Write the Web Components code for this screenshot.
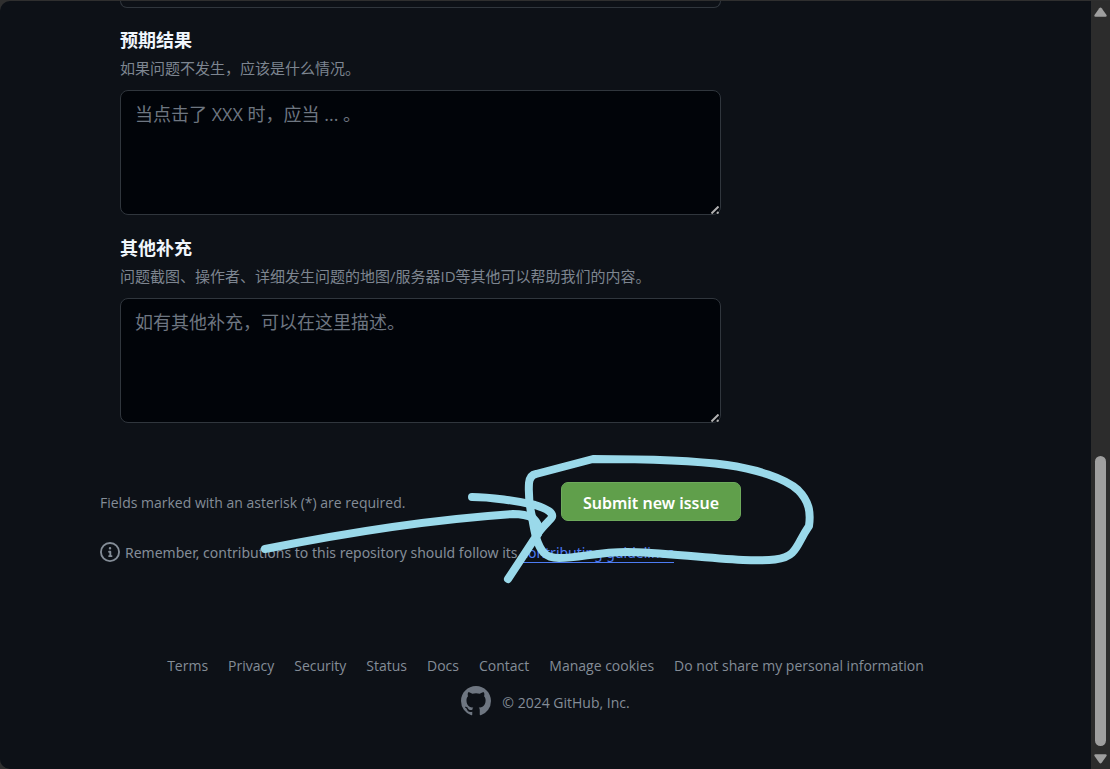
<!DOCTYPE html>
<html lang="zh-CN">
<head>
<meta charset="utf-8">
<title>New issue</title>
<style>
  html { color-scheme: dark; background: #2f2f2f; }
  body { margin: 0; font-family: "Open Sans", "Noto Sans CJK SC", sans-serif; font-size: 14px; color: #848d97; }
</style>
</head>
<body>
<issue-page></issue-page>
<script>
const define = (name, html, setup) => {
  const template = document.createElement('template');
  template.innerHTML = html;
  customElements.define(name, class extends HTMLElement {
    constructor() {
      super();
      this.attachShadow({ mode: 'open' }).append(template.content.cloneNode(true));
    }
    connectedCallback() { if (setup) setup(this, this.shadowRoot); }
  });
};

define('form-field', `
<style>
  :host { display: block; }
  label { display: block; font: 700 18px/26px "Open Sans", "Noto Sans CJK SC", sans-serif; color: #f0f6fc; }
  p { margin: 0 0 7px; font: 400 15px/30px "Open Sans", "Noto Sans CJK SC", sans-serif; color: #7d8590; }
  .box { position: relative; }
  textarea {
    display: block; box-sizing: border-box; width: 100%; height: 125px; margin: 0; padding: 8px 14px;
    background: #010409; color: #e6edf3; border: 1px solid #30363d; border-radius: 8px; resize: vertical;
    font: 400 18px/30px "Open Sans", "Noto Sans CJK SC", sans-serif;
  }
  textarea::placeholder { color: #6e7681; opacity: 1; }
  textarea::-webkit-resizer { background: transparent; }
  svg { position: absolute; right: 2px; bottom: 1px; width: 8px; height: 8px; stroke: #b0b0b0; stroke-width: 2; pointer-events: none; }
</style>
<label for="t"></label><p id="d"></p>
<div class="box"><textarea id="t" aria-describedby="d"></textarea><svg viewBox="0 0 8 8" aria-hidden="true"><path d="M.5 7.500L7.500.5M6 7.500L7.500 6"/></svg></div>`,
(host, root) => {
  root.querySelector('label').textContent = host.getAttribute('label');
  root.querySelector('p').textContent = host.getAttribute('hint');
  root.querySelector('textarea').placeholder = host.getAttribute('placeholder');
});

define('submit-button', `
<style>
  :host { display: block; }
  button {
    display: block; box-sizing: border-box; height: 39px; width: 180px; padding: 2px 0 0; margin: 0;
    border: 1px solid #6eaa5c; border-radius: 7px; background: #609f4b; color: #fff;
    font: 600 16px/24px "Noto Sans", sans-serif;
  }
</style>
<button type="submit"><slot></slot></button>`);

define('contributing-note', `
<style>
  :host { display: flex; align-items: center; gap: 5px; font-family: "Noto Sans", sans-serif; line-height: 24px; }
  svg { width: 20px; height: 20px; fill: #848d97; flex: none; }
  span { padding-top: 2px; }
  a { color: #4c7cf3; text-decoration: none; border-bottom: 1px solid; line-height: 18px; display: inline-block; }
</style>
<svg viewBox="0 0 16 16" aria-hidden="true"><path d="M0 8a8 8 0 1 1 16 0A8 8 0 0 1 0 8Zm8-6.5a6.5 6.5 0 1 0 0 13 6.500 6.500 0 0 0 0-13ZM6.500 7.750A.75.75 0 0 1 7.250 7h1a.75.75 0 0 1 .75.75v2.750h.25a.75.75 0 0 1 0 1.500h-2a.75.75 0 0 1 0-1.500h.25v-2h-.25a.75.75 0 0 1-.75-.75ZM8 6a1 1 0 1 1 0-2 1 1 0 0 1 0 2Z"/></svg>
<span>Remember, contributions to this repository should follow its <a href="#guidelines">contributing guidelines</a></span>`);

define('site-footer', `
<style>
  :host { display: flex; flex-direction: column; align-items: center; gap: 8px; line-height: 24px; }
  nav { display: flex; flex-wrap: wrap; justify-content: center; gap: 0 20px; }
  a { color: inherit; text-decoration: none; }
  div { display: flex; align-items: center; gap: 11px; }
  svg { width: 30px; height: 30px; fill: #6e7681; }
  span { padding-top: 3px; }
</style>
<nav>
  <a href="#terms">Terms</a><a href="#privacy">Privacy</a><a href="#security">Security</a><a href="#status">Status</a>
  <a href="#docs">Docs</a><a href="#contact">Contact</a><a href="#cookies">Manage cookies</a>
  <a href="#personal">Do not share my personal information</a>
</nav>
<div>
  <svg viewBox="0 0 16 16" aria-hidden="true"><path d="M8 0c4.420 0 8 3.580 8 8a8.013 8.013 0 0 1-5.450 7.590c-.4.08-.55-.17-.55-.38 0-.27.01-1.130.01-2.200 0-.75-.25-1.230-.54-1.480 1.780-.2 3.650-.88 3.650-3.950 0-.88-.31-1.590-.82-2.150.08-.2.36-1.020-.08-2.120 0 0-.67-.22-2.200.82-.64-.18-1.320-.27-2-.27-.68 0-1.360.09-2 .27-1.530-1.030-2.200-.82-2.200-.82-.44 1.100-.16 1.920-.08 2.120-.51.56-.82 1.280-.82 2.150 0 3.060 1.860 3.750 3.640 3.950-.23.2-.44.55-.51 1.070-.46.21-1.610.55-2.330-.66-.15-.24-.6-.83-1.230-.82-.67.01-.27.38.01.53.34.19.73.9.82 1.130.16.45.68 1.310 2.690.94 0 .67.01 1.300.01 1.490 0 .21-.15.45-.55.38A7.995 7.995 0 0 1 0 8c0-4.420 3.580-8 8-8Z"/></svg>
  <span>© 2024 GitHub, Inc.</span>
</div>`);

define('scroll-rail', `
<style>
  :host { display: flex; flex-direction: column; align-items: center; width: 19px; box-sizing: border-box; padding: 6px 0 5px; background: #2c2c2c; }
  svg { width: 13px; height: 10px; fill: #9f9f9f; flex: none; }
  .track { flex: 1; display: flex; flex-direction: column; padding-bottom: 8px; }
  .above { flex: 44; }
  .thumb { flex: 29; width: 11px; border-radius: 6px; background: #9f9f9f; }
</style>
<svg viewBox="0 0 13 10"><path d="M5.300 1.200Q6.500-.2 7.700 1.200L12.500 8Q13.200 9.700 11.500 9.700H1.500Q-.2 9.700.5 8Z"/></svg>
<div class="track"><div class="above"></div><div class="thumb"></div></div>
<svg viewBox="0 0 13 10"><path d="M5.300 8.800Q6.500 10.200 7.700 8.800L12.500 2Q13.200.3 11.500.3H1.500Q-.2.3.5 2Z"/></svg>`);

define('ink-overlay', `
<style>
  :host { position: absolute; top: 0; left: 0; pointer-events: none; }
  svg { display: block; width: 1090px; height: 768px; fill: none; stroke: #9ad9ea; stroke-width: 8; stroke-linecap: round; stroke-linejoin: round; }
</style>
<svg viewBox="0 1 1090 768" aria-hidden="true">
  <path d="M593 459L536 474Q530 475 529 483C528 500 530 507 532 517C535 535 537 545 544 553Q549 558 559 558C580 558 597 552 627 552C660 552 700 558 743 560C770 561 785 560 792 553C799 546 800 539 809 526C811 512 809 501 798 490C785 478 755 469 727 465C690 460 640 459 593 459Z"/>
  <path d="M265 549C330 536 423 520 513 514Q525 514 533 518Q541 526 538 534"/>
  <path d="M472 497C490 497 518 501 535 505Q554 511 552 517C550 521 541 527 535 538L508 579"/>
</svg>`);

define('issue-page', `
<style>
  :host { display: flex; min-height: 100vh; box-sizing: border-box; padding-top: 1px; }
  main { position: relative; flex: 1; min-width: 0; background: #0d1117; border-radius: 10px 0 0 10px; overflow: hidden; }
  form { max-width: 641px; margin-left: 100px; }
  .fields { display: flex; flex-direction: column; gap: 20px; padding: 0 20px; }
  .previous { height: 6px; border: 1px solid #30363d; border-top: 0; border-radius: 0 0 8px 8px; margin-bottom: -1px; }
  .submit { display: flex; justify-content: space-between; align-items: center; margin-top: 59px; }
  .submit span { padding-top: 2px; }
  contributing-note { margin-top: 18px; white-space: nowrap; }
  site-footer { margin-top: 89px; padding-bottom: 40px; }
</style>
<main>
  <form>
    <div class="fields">
      <div class="previous"></div>
      <form-field label="预期结果" hint="如果问题不发生，应该是什么情况。" placeholder="当点击了 XXX 时，应当 ... 。"></form-field>
      <form-field label="其他补充" hint="问题截图、操作者、详细发生问题的地图/服务器ID等其他可以帮助我们的内容。" placeholder="如有其他补充，可以在这里描述。"></form-field>
    </div>
    <div class="submit"><span>Fields marked with an asterisk (*) are required.</span><submit-button>Submit new issue</submit-button></div>
    <contributing-note></contributing-note>
  </form>
  <site-footer></site-footer>
  <ink-overlay></ink-overlay>
</main>
<scroll-rail></scroll-rail>`);
</script>
</body>
</html>
